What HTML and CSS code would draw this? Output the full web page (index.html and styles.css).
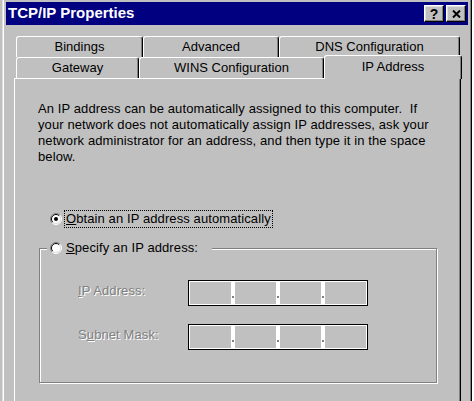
FILE: index.html
```html
<!DOCTYPE html>
<html>
<head>
<meta charset="utf-8">
<title>TCP/IP Properties</title>
<link rel="stylesheet" href="styles.css">
</head>
<body>
<div class="window">
  <div class="titlebar">
    <span class="title">TCP/IP Properties</span>
    <div class="tbtns">
      <div class="tbtn help">?</div>
      <div class="tbtn close"><svg width="9" height="8" viewBox="0 0 9 8"><path d="M1 0.5L8 7.5M8 0.5L1 7.5" stroke="#000" stroke-width="2" fill="none"/></svg></div>
    </div>
  </div>
  <div class="client">
    <div class="tabs">
      <div class="tabrow">
        <div class="tab t-bind">Bindings</div>
        <div class="tab t-adv">Advanced</div>
        <div class="tab t-dns">DNS Configuration</div>
      </div>
      <div class="tabrow">
        <div class="tab t-gw">Gateway</div>
        <div class="tab t-wins">WINS Configuration</div>
        <div class="tab t-ip selected">IP Address</div>
      </div>
    </div>
    <div class="page">
      <p class="intro">An IP address can be automatically assigned to this computer.&nbsp; If<br>your network does not automatically assign IP addresses, ask your<br>network administrator for an address, and then type it in the space<br>below.</p>
      <div class="radio-row">
        <svg class="radio" width="12" height="12" viewBox="0 0 12 12">
          <circle cx="6" cy="6" r="5" fill="#fff"/>
          <path d="M2.1 9.9A5.5 5.5 0 0 1 9.9 2.1" fill="none" stroke="#808080"/>
          <path d="M9.9 2.1A5.5 5.5 0 0 1 2.1 9.9" fill="none" stroke="#fff"/>
          <path d="M2.8 9.2A4.5 4.5 0 0 1 9.2 2.8" fill="none" stroke="#000"/>
          <path d="M9.2 2.8A4.5 4.5 0 0 1 2.8 9.2" fill="none" stroke="#dfdfdf"/>
          <circle cx="6" cy="6" r="2" fill="#000"/>
        </svg>
        <span class="rlabel focus"><u>O</u>btain an IP address automatically</span>
      </div>
      <fieldset class="group">
        <legend class="legend"><span class="legend-inner">
          <svg class="radio" width="12" height="12" viewBox="0 0 12 12">
            <circle cx="6" cy="6" r="5" fill="#fff"/>
            <path d="M2.1 9.9A5.5 5.5 0 0 1 9.9 2.1" fill="none" stroke="#808080"/>
            <path d="M9.9 2.1A5.5 5.5 0 0 1 2.1 9.9" fill="none" stroke="#fff"/>
            <path d="M2.8 9.2A4.5 4.5 0 0 1 9.2 2.8" fill="none" stroke="#000"/>
            <path d="M9.2 2.8A4.5 4.5 0 0 1 2.8 9.2" fill="none" stroke="#dfdfdf"/>
          </svg>
          <span class="rlabel"><u>S</u>pecify an IP address:</span>
        </span></legend>
        <div class="field-row first">
          <span class="flabel"><u>I</u>P Address:</span>
          <div class="ipbox">
            <span class="seg"></span><span class="sep"><i class="dot"></i></span>
            <span class="seg"></span><span class="sep"><i class="dot"></i></span>
            <span class="seg"></span><span class="sep"><i class="dot"></i></span>
            <span class="seg"></span>
          </div>
        </div>
        <div class="field-row">
          <span class="flabel">S<u>u</u>bnet Mask:</span>
          <div class="ipbox">
            <span class="seg"></span><span class="sep"><i class="dot"></i></span>
            <span class="seg"></span><span class="sep"><i class="dot"></i></span>
            <span class="seg"></span><span class="sep"><i class="dot"></i></span>
            <span class="seg"></span>
          </div>
        </div>
      </fieldset>
    </div>
  </div>
</div>
</body>
</html>
```

FILE: styles.css
```css
html, body {
  margin: 0;
  padding: 0;
}
body {
  width: 474px;
  height: 401px;
  overflow: hidden;
  background: linear-gradient(to right, #c0c0c0 472px, #ffffff 472px);
  font-family: "Liberation Sans", Arial, sans-serif;
  font-size: 13px;
  letter-spacing: 0.1px;
  color: #000;
}
.window {
  box-sizing: border-box;
  margin: -2px 0 0 2px;
  width: 470px;
  height: 403px;
  padding: 4px 4px 0 4px;
  background: #c0c0c0;
  box-shadow: inset -1px 0 #000, inset 1px 1px #dfdfdf, inset -2px 0 #808080, inset 2px 2px #fff;
  overflow: hidden;
}
.titlebar {
  height: 23px;
  background: #000080;
  display: flex;
  align-items: center;
  justify-content: space-between;
  padding: 0 2px 0 2px;
}
.title {
  color: #fff;
  font-weight: bold;
  font-size: 15px;
  letter-spacing: 0;
  line-height: 17px;
  margin-top: -2px;
}
.tbtns {
  display: flex;
  gap: 2px;
}
.tbtn {
  box-sizing: border-box;
  width: 20px;
  height: 17px;
  background: #c0c0c0;
  border: 1px solid;
  border-color: #fff #000 #000 #fff;
  box-shadow: inset -1px -1px #808080, inset 1px 1px #dfdfdf;
  display: flex;
  align-items: center;
  justify-content: center;
  font-weight: bold;
  font-size: 14px;
  line-height: 14px;
}
.client {
  padding: 11px 0 0 8px;
}
.tabs {
  margin-left: 2px;
}
.tabrow {
  display: flex;
  height: 21px;
}
.tab {
  box-sizing: border-box;
  height: 21px;
  border-top: 1px solid #fff;
  border-left: 1px solid #fff;
  border-right: 1px solid #000;
  border-radius: 3px 3px 0 0;
  box-shadow: inset -1px 0 #808080;
  background: #c0c0c0;
  display: flex;
  align-items: center;
  justify-content: center;
  line-height: 16px;
  letter-spacing: 0;
}
.t-bind { width: 127px; }
.t-adv { width: 136px; }
.t-dns { width: 181px; }
.t-gw { width: 123px; }
.t-wins { width: 185px; }
.t-ip { width: 138px; }
.tab.selected {
  height: 24px;
  margin-top: -2px;
  margin-bottom: -1px;
  padding-bottom: 2px;
  position: relative;
  z-index: 1;
}
.page {
  box-sizing: border-box;
  width: 447px;
  height: 330px;
  border-top: 1px solid #fff;
  border-left: 1px solid #fff;
  border-right: 1px solid #000;
  box-shadow: inset -1px 0 #808080;
  padding: 22px 0 0 23px;
}
.intro {
  margin: 0;
  line-height: 16px;
  white-space: nowrap;
}
.radio-row {
  display: flex;
  align-items: center;
  margin: 45px 0 0 12px;
}
.radio {
  display: block;
  flex: none;
}
.rlabel {
  display: block;
  line-height: 16px;
  border: 1px solid transparent;
  padding: 0 1px;
  margin-left: 2px;
  white-space: nowrap;
}
.rlabel.focus {
  border: 1px dotted #000;
}
.group {
  box-sizing: border-box;
  width: 398px;
  margin: 11px 0 0 1px;
  padding: 0 0 32px 0;
  border: 1px solid #808080;
  box-shadow: inset 1px 1px #fff, 1px 1px #fff;
  min-inline-size: 0;
}
.legend {
  margin-left: 7px;
  padding: 0 12px 0 3px;
  background: #c0c0c0;
}
.legend-inner {
  display: flex;
  align-items: center;
}
.field-row {
  display: flex;
  align-items: flex-start;
  margin-top: 18px;
  padding-left: 38px;
}
.field-row.first {
  margin-top: 23px;
}
.flabel {
  width: 110px;
  margin-top: 3px;
  line-height: 16px;
  color: #808080;
  text-shadow: 1px 1px 0 #fff;
}
.ipbox {
  box-sizing: border-box;
  width: 180px;
  height: 26px;
  border: 1px solid #000;
  background: #fff;
  padding: 1px;
  display: flex;
}
.seg {
  width: 41px;
  height: 22px;
  background: #c0c0c0;
}
.sep {
  box-sizing: border-box;
  width: 4px;
  height: 22px;
  display: flex;
  align-items: flex-end;
  padding: 0 0 6px 1px;
}
.dot {
  display: block;
  width: 2px;
  height: 2px;
  background: #808080;
}
```
